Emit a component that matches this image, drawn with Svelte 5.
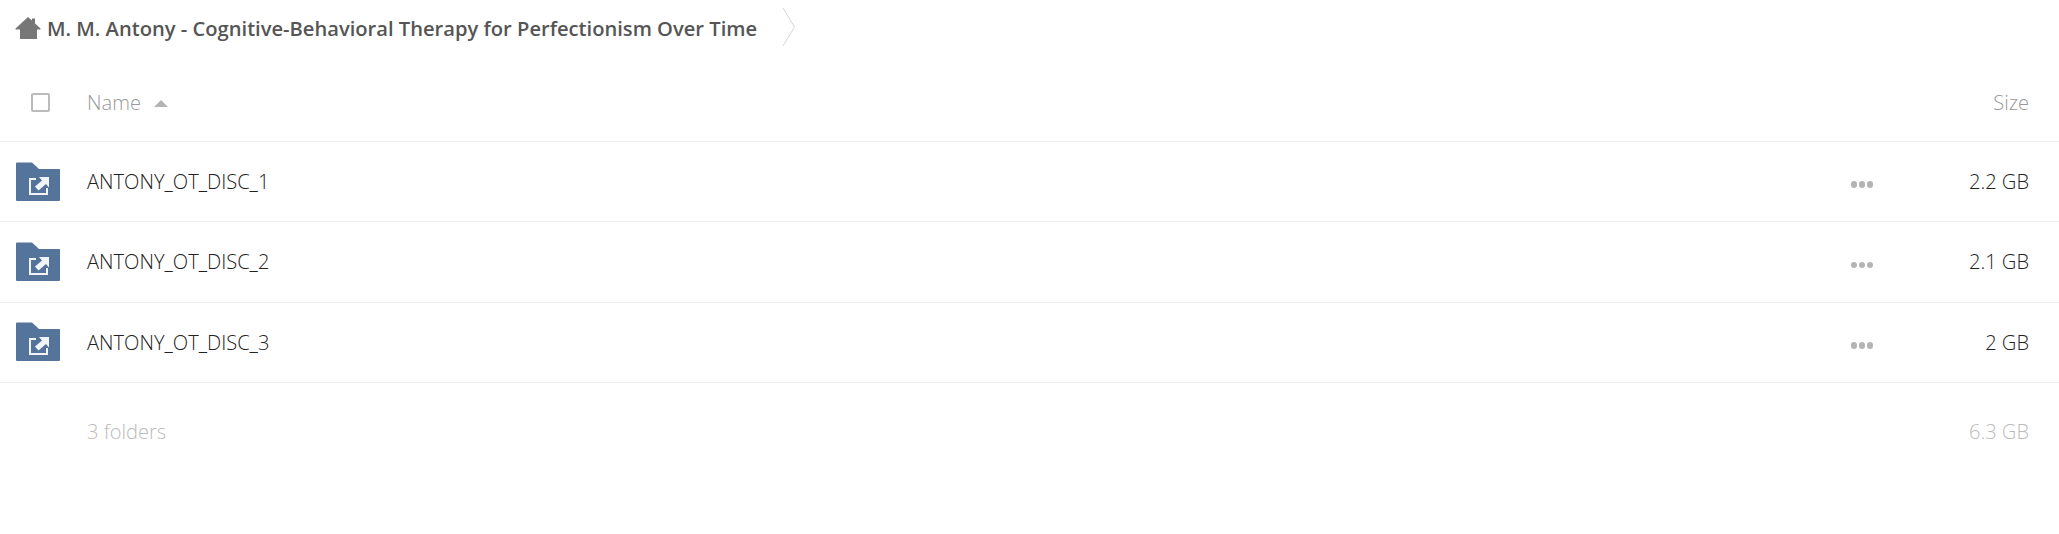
<script>
  const folders = [
    { name: 'ANTONY_OT_DISC_1', size: '2.2 GB' },
    { name: 'ANTONY_OT_DISC_2', size: '2.1 GB' },
    { name: 'ANTONY_OT_DISC_3', size: '2 GB' }
  ];
</script>

<div class="files">
  <div class="breadcrumb">
    <svg class="home" width="26" height="24" viewBox="0 0 26 24" aria-hidden="true">
      <path d="M13 1 L17 4.5 V2.5 H20 V7.5 L25.5 12.5 V13.5 H22 V23 H5 V13.5 H0.5 V12.5 Z" fill="#777" />
    </svg>
    <span class="crumb">M. M. Antony - Cognitive-Behavioral Therapy for Perfectionism Over Time</span>
    <svg class="chevron" width="14" height="40" viewBox="0 0 14 40" aria-hidden="true">
      <path d="M1 1 L12.5 20 L1 39" fill="none" stroke="#d6d6d6" stroke-width="1" />
    </svg>
  </div>

  <div class="row header">
    <div class="icon-cell"><span class="checkbox"></span></div>
    <div class="name">Name <span class="sort"></span></div>
    <div class="size">Size</div>
  </div>

  {#each folders as folder}
    <div class="row item">
      <div class="icon-cell">
        <svg width="46" height="40" viewBox="0 0 46 40" aria-hidden="true">
          <path d="M1 1.5 a1 1 0 0 1 1 -1 H17 L24 7 H44 a1 1 0 0 1 1 1 V38 a1 1 0 0 1 -1 1 H2 a1 1 0 0 1 -1 -1 Z" fill="#55749c" />
          <path d="M21 17 H15 V32 H32 V26" fill="none" stroke="#f2f5f8" stroke-width="2" />
          <path d="M20 24.5 L27 18.5 L24 15 H34 V25.5 L31 22 L23.5 28.5 Z" fill="#f2f5f8" />
        </svg>
      </div>
      <div class="name">{folder.name}</div>
      <div class="actions"><i></i><i></i><i></i></div>
      <div class="size">{folder.size}</div>
    </div>
  {/each}

  <div class="row summary">
    <div class="icon-cell"></div>
    <div class="name">3 folders</div>
    <div class="size">6.3 GB</div>
  </div>
</div>

<style>
  :global(body) {
    margin: 0;
    background: #fff;
  }

  .files {
    font-family: "Open Sans", sans-serif;
    font-weight: 300;
    font-size: 20.1px;
    color: #222;
  }

  .breadcrumb {
    display: flex;
    align-items: center;
    height: 58px;
    padding-left: 15px;
  }

  .home {
    margin-top: -3px;
    margin-right: 6px;
    flex: none;
  }

  .crumb {
    font-size: 20.15px;
    font-weight: 600;
    color: #555;
    margin-top: -3px;
  }

  .chevron {
    margin-left: 25px;
    margin-top: -5px;
    flex: none;
  }

  .row {
    display: flex;
    align-items: center;
    padding-right: 30px;
  }

  .icon-cell {
    width: 87px;
    flex: none;
    display: flex;
    padding-left: 15px;
    box-sizing: border-box;
  }

  .name {
    flex: 1;
  }

  .size {
    width: 157px;
    text-align: right;
  }

  .header {
    height: 84px;
    padding-top: 6px;
    border-bottom: 1px solid #eee;
    box-sizing: border-box;
    color: #999;
  }

  .checkbox {
    width: 15px;
    height: 15px;
    margin-left: 16px;
    border: 2px solid #bbb;
    border-radius: 2px;
  }

  .sort {
    display: inline-block;
    margin-left: 8px;
    vertical-align: 3px;
    border: 7px solid transparent;
    border-top: 0;
    border-bottom: 7px solid #b4b4b4;
  }

  .item {
    height: 80.33px;
    border-bottom: 1px solid #eee;
    box-sizing: border-box;
  }

  .item svg {
    display: block;
  }

  .actions {
    display: flex;
    gap: 1.5px;
    margin-right: -1px;
    margin-top: 6px;
  }

  .actions i {
    width: 6.5px;
    height: 6.5px;
    border-radius: 50%;
    background: #b4b4b4;
  }

  .summary {
    height: 96px;
    padding-top: 1px;
    color: #bbb;
  }
</style>
